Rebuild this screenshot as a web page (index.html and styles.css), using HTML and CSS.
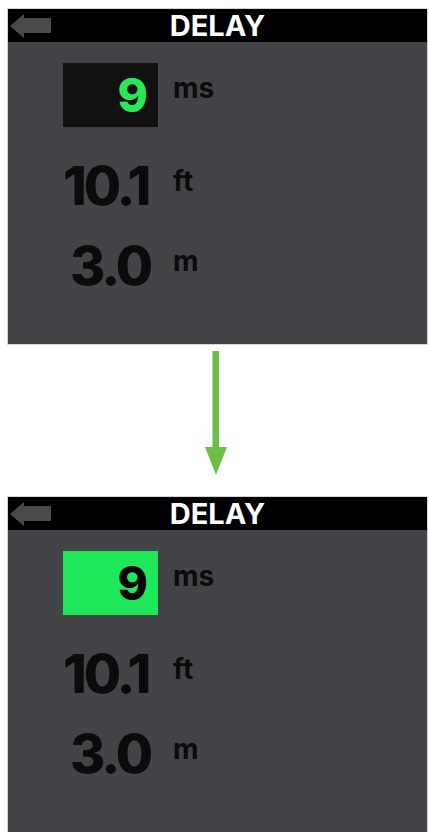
FILE: index.html
```html
<!DOCTYPE html>
<html lang="en">
<head>
<meta charset="utf-8">
<title>Delay</title>
<link rel="stylesheet" href="styles.css">
</head>
<body>
<div class="page">
  <section class="screen">
    <header class="titlebar">
      <svg class="back" width="42" height="24" viewBox="0 0 42 24"><polygon points="0,12 14,0 14,4 41,4 41,19 14,19 14,24" fill="#4b4b4d"/></svg>
      <div class="title">DELAY</div>
    </header>
    <div class="rows">
      <div class="row row-first">
        <div class="num box box-dark">9</div>
        <div class="unit">ms</div>
      </div>
      <div class="row row-second">
        <div class="num">10.1</div>
        <div class="unit">ft</div>
      </div>
      <div class="row row-third">
        <div class="num">3.0</div>
        <div class="unit">m</div>
      </div>
    </div>
  </section>

  <div class="flow-arrow">
    <svg width="22" height="124" viewBox="0 0 22 124"><rect x="7.5" y="0" width="6.5" height="100" fill="#6cbf45"/><polygon points="0,96 22,96 11,124" fill="#6cbf45"/></svg>
  </div>

  <section class="screen">
    <header class="titlebar">
      <svg class="back" width="42" height="24" viewBox="0 0 42 24"><polygon points="0,12 14,0 14,4 41,4 41,19 14,19 14,24" fill="#4b4b4d"/></svg>
      <div class="title">DELAY</div>
    </header>
    <div class="rows">
      <div class="row row-first">
        <div class="num box box-green">9</div>
        <div class="unit">ms</div>
      </div>
      <div class="row row-second">
        <div class="num">10.1</div>
        <div class="unit">ft</div>
      </div>
      <div class="row row-third">
        <div class="num">3.0</div>
        <div class="unit">m</div>
      </div>
    </div>
  </section>
</div>
</body>
</html>
```

FILE: styles.css
```css
* { box-sizing: border-box; }
html, body { margin: 0; padding: 0; background: #ffffff; }
body { font-family: Inter, "Liberation Sans", Arial, sans-serif; }

.page {
  width: 419px;
  margin: 9px 0 0 8px;
}

.screen {
  height: 335px;
  background: #444348;
  box-shadow: 0 0 0 1px #d6d6d6;
  overflow: hidden;
}

.titlebar {
  height: 33px;
  background: #000000;
  display: grid;
  grid-template-columns: 1fr auto 1fr;
  align-items: center;
}

.back {
  display: block;
  margin-left: 2px;
  grid-column: 1;
}

.title {
  grid-column: 2;
  color: #ffffff;
  font-weight: 700;
  font-size: 29px;
  line-height: 33px;
}

.rows {
  padding-left: 55px;
}

.row {
  display: grid;
  grid-template-columns: 95px auto;
  column-gap: 15px;
  align-items: start;
}

.num {
  text-align: right;
  color: #0b0b0b;
  font-weight: 800;
  padding-right: 9px;
}

.row-first { margin-top: 21px; }
.row-first .num {
  height: 64px;
  font-size: 46px;
  line-height: 64px;
  padding-right: 10px;
}
.box-dark { background: #111111; color: #27e85a; }
.box-green { background: #1ee85a; color: #050505; }

.row-second { margin-top: 29px; }
.row-third { margin-top: 20px; }
.row-second .num,
.row-third .num {
  font-size: 54px;
  line-height: 60px;
  letter-spacing: -3px;
}
.row-second .num { padding-right: 11px; }
.row-third .num { padding-right: 8px; }

.unit {
  color: #0b0b0b;
  font-weight: 700;
  font-size: 28px;
  line-height: 28px;
  padding-top: 11px;
}

.flow-arrow {
  display: flex;
  justify-content: center;
  padding-right: 3px;
  margin: 7px 0 22px;
}
.flow-arrow svg { display: block; }
```
